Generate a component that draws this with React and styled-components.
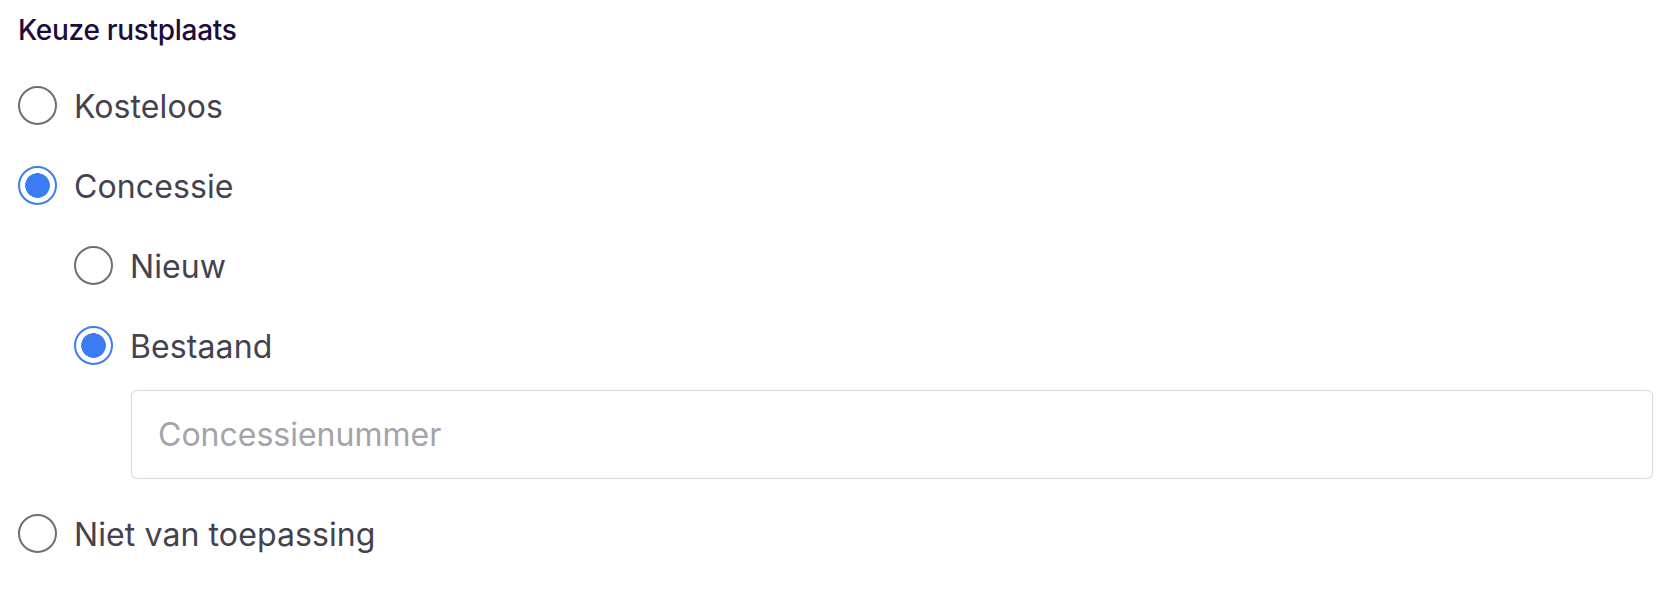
import React, { useState } from 'react'
import styled, { createGlobalStyle } from 'styled-components'

const GlobalStyle = createGlobalStyle`
  body {
    margin: 0;
    background: #ffffff;
    font-family: Inter, "Noto Sans", sans-serif;
  }
`

const Page = styled.div`
  padding: 12px 23px 30px 18px;
`

const Title = styled.div`
  font-size: 28px;
  line-height: 36px;
  font-weight: 500;
  color: #1e0b3a;
  letter-spacing: -0.3px;
  margin-bottom: 32px;
`

const List = styled.div`
  display: flex;
  flex-direction: column;
  gap: 29px;
`

const SubList = styled(List)`
  margin-top: 29px;
  margin-left: 56px;
`

const Option = styled.label`
  display: flex;
  align-items: center;
  gap: 17px;
  height: 51px;
  cursor: pointer;
`

const Radio = styled.input.attrs({ type: 'radio' })`
  appearance: none;
  margin: 0;
  flex: none;
  width: 39px;
  height: 39px;
  border-radius: 50%;
  border: 2px solid #6f6f6f;
  background: #fff;
  box-sizing: border-box;
  cursor: pointer;

  &:checked {
    border-color: #3d7cf4;
    background: radial-gradient(circle, #3b7bf3 0 12px, #fff 12.6px);
  }
`

const LabelText = styled.span`
  font-size: 32px;
  line-height: 39px;
  margin-top: 2px;
  color: #45424f;
  letter-spacing: 0.1px;
`

const Field = styled.input`
  display: block;
  box-sizing: border-box;
  width: calc(100% - 57px);
  height: 89px;
  margin: -10px 0 0 57px;
  padding: 0 26px;
  border: 1.5px solid #d6d6db;
  border-radius: 6px;
  font-family: Inter, "Noto Sans", sans-serif;
  font-size: 32px;
  color: #45424f;
  outline: none;

  &::placeholder {
    color: #a4a3a9;
  }
`

const App = () => {
  const [main, setMain] = useState('concessie')
  const [sub, setSub] = useState('bestaand')

  return (
    <Page>
      <GlobalStyle />
      <Title>Keuze rustplaats</Title>
      <List>
        <Option>
          <Radio name="rust" checked={main === 'kosteloos'} onChange={() => setMain('kosteloos')} />
          <LabelText>Kosteloos</LabelText>
        </Option>
        <div>
          <Option>
            <Radio name="rust" checked={main === 'concessie'} onChange={() => setMain('concessie')} />
            <LabelText>Concessie</LabelText>
          </Option>
          {main === 'concessie' && (
            <SubList>
              <Option>
                <Radio name="soort" checked={sub === 'nieuw'} onChange={() => setSub('nieuw')} />
                <LabelText>Nieuw</LabelText>
              </Option>
              <Option>
                <Radio name="soort" checked={sub === 'bestaand'} onChange={() => setSub('bestaand')} />
                <LabelText>Bestaand</LabelText>
              </Option>
              {sub === 'bestaand' && <Field placeholder="Concessienummer" />}
            </SubList>
          )}
        </div>
        <Option>
          <Radio name="rust" checked={main === 'nvt'} onChange={() => setMain('nvt')} />
          <LabelText>Niet van toepassing</LabelText>
        </Option>
      </List>
    </Page>
  )
}

export default App
